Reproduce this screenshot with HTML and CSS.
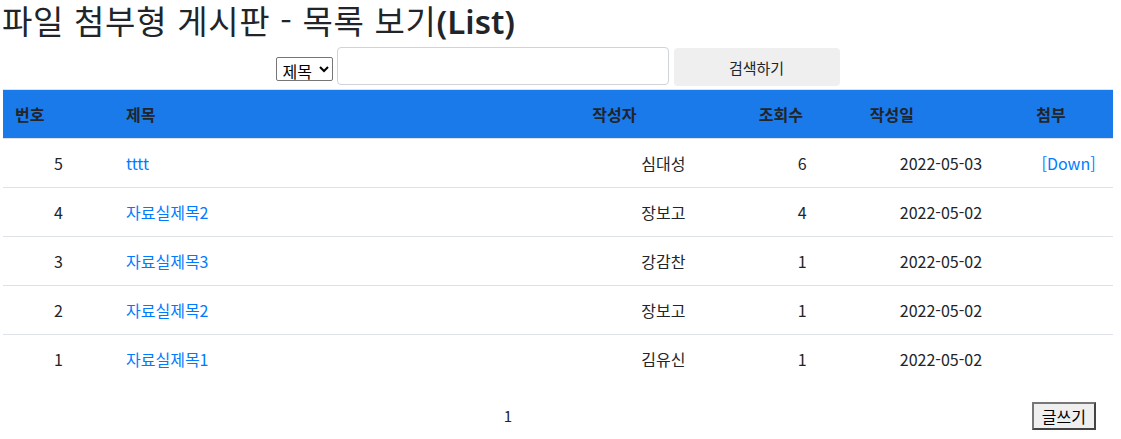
FILE: index.html
```html
<!DOCTYPE html>
<html lang="ko">
<head>
<meta charset="utf-8">
<title>파일 첨부형 게시판 - 목록 보기(List)</title>
<link rel="stylesheet" href="styles.css">
</head>
<body>
<h2 class="title">파일 첨부형 게시판 - 목록 보기<span class="title-en">(List)</span></h2>

<form class="search">
  <select class="search-field">
    <option>제목</option>
    <option>내용</option>
  </select>
  <input type="text" class="search-input">
  <button type="button" class="search-btn">검색하기</button>
</form>

<table class="board">
  <thead>
    <tr class="head-row">
      <th class="c-num">번호</th>
      <th class="c-title">제목</th>
      <th class="c-author">작성자</th>
      <th class="c-visit">조회수</th>
      <th class="c-date">작성일</th>
      <th class="c-file">첨부</th>
    </tr>
  </thead>
  <tbody>
    <tr>
      <td class="center">5</td>
      <td><a href="#" class="link">tttt</a></td>
      <td class="center">심대성</td>
      <td class="center">6</td>
      <td class="center">2022-05-03</td>
      <td class="center"><a href="#" class="link">[Down]</a></td>
    </tr>
    <tr>
      <td class="center">4</td>
      <td><a href="#" class="link">자료실제목2</a></td>
      <td class="center">장보고</td>
      <td class="center">4</td>
      <td class="center">2022-05-02</td>
      <td class="center"></td>
    </tr>
    <tr>
      <td class="center">3</td>
      <td><a href="#" class="link">자료실제목3</a></td>
      <td class="center">강감찬</td>
      <td class="center">1</td>
      <td class="center">2022-05-02</td>
      <td class="center"></td>
    </tr>
    <tr>
      <td class="center">2</td>
      <td><a href="#" class="link">자료실제목2</a></td>
      <td class="center">장보고</td>
      <td class="center">1</td>
      <td class="center">2022-05-02</td>
      <td class="center"></td>
    </tr>
    <tr class="last-row">
      <td class="center">1</td>
      <td><a href="#" class="link">자료실제목1</a></td>
      <td class="center">김유신</td>
      <td class="center">1</td>
      <td class="center">2022-05-02</td>
      <td class="center"></td>
    </tr>
  </tbody>
</table>

<div class="footer-row">
  <div class="paging">1</div>
  <div class="write-cell"><button type="button" class="write-btn">글쓰기</button></div>
</div>
</body>
</html>
```

FILE: styles.css
```css
html, body {
  margin: 0;
  padding: 0;
}
body {
  font-family: "Noto Sans CJK KR", "Noto Sans", sans-serif;
  font-size: 16px;
  line-height: 1.5;
  color: #212529;
  background: #fff;
}
.title {
  margin: -4px 0 2px 2px;
  padding: 0;
  font-size: 33px;
  font-weight: 400;
  line-height: 48px;
  letter-spacing: 0.7px;
}
.title-en {
  font-family: "Noto Sans", sans-serif;
  font-weight: 600;
  letter-spacing: 0;
}
.search {
  display: flex;
  justify-content: center;
  align-items: center;
  gap: 4px;
  margin: 0 0 3px 0;
  padding-right: 6px;
}
.search-field {
  font-family: inherit;
  font-size: 16px;
  line-height: 20px;
  height: 24px;
  width: 57px;
  margin-top: 3px;
  padding: 0 0 0 2px;
  border: 1px solid #767676;
  border-radius: 2px;
  background: #fff;
  color: #000;
}
.search-input {
  box-sizing: border-box;
  width: 332px;
  height: 38px;
  margin-top: -3px;
  border: 1px solid #ced4da;
  border-radius: 4px;
  padding: 6px 12px;
  font-family: inherit;
  font-size: 16px;
}
.search-btn {
  box-sizing: border-box;
  width: 166px;
  height: 38px;
  margin-left: 1px;
  border: 1px solid transparent;
  border-radius: 4px;
  background: #efefef;
  color: #212529;
  font-family: inherit;
  font-size: 15px;
}
.board {
  width: 1110px;
  margin-left: 3px;
  border-collapse: collapse;
  table-layout: fixed;
}
.board th,
.board td {
  box-sizing: border-box;
  padding: 12px;
  border-top: 1px solid #dee2e6;
  vertical-align: top;
  text-align: left;
}
.head-row th {
  background: #1a7ae9;
  color: #212529;
  font-weight: 700;
  border-bottom: 1px solid #dee2e6;
  padding-top: 12px;
  padding-bottom: 12px;
}
.c-num { width: 10%; }
.c-title { width: 42%; }
.c-author { width: 15%; }
.c-visit { width: 10%; }
.c-date { width: 15%; }
.c-file { width: 8%; }
.board td.center {
  text-align: center;
}
.last-row td {
  border-bottom: none;
}
.link {
  color: #007bff;
  text-decoration: none;
}
.footer-row {
  display: grid;
  grid-template-columns: 1010px 100px;
  margin-left: 3px;
  width: 1110px;
  padding-top: 19px;
  align-items: center;
}
.paging {
  text-align: center;
  font-size: 15px;
  padding-top: 0;
}
.write-cell {
  text-align: right;
  padding-right: 17px;
}
.write-btn {
  font-family: inherit;
  font-size: 16px;
  line-height: 20px;
  height: 28px;
  padding: 1px 8px;
  background: #efefef;
  color: #000;
  border: 2px solid #444;
  border-top-color: #777;
  border-left-color: #777;
  border-radius: 0;
}
```
